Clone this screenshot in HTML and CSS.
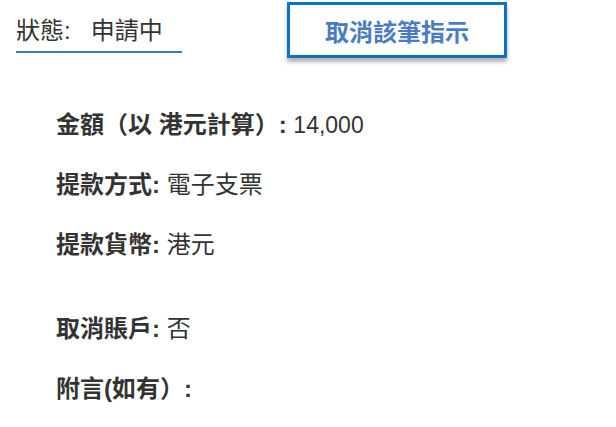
FILE: index.html
```html
<!DOCTYPE html>
<html lang="zh-Hant">
<head>
<meta charset="utf-8">
<link rel="stylesheet" href="styles.css">
</head>
<body>
<div class="page">
  <div class="header">
    <div class="status"><span class="status-label">狀態:</span><span class="status-value">申請中</span></div>
    <button class="cancel-btn">取消該筆指示</button>
  </div>
  <div class="details">
    <div class="row"><span class="label">金額（以 港元計算）:</span> <span class="value num">14,000</span></div>
    <div class="row"><span class="label">提款方式:</span> <span class="value">電子支票</span></div>
    <div class="row"><span class="label">提款貨幣:</span> <span class="value">港元</span></div>
    <div class="row row-spaced"><span class="label">取消賬戶:</span> <span class="value">否</span></div>
    <div class="row"><span class="label">附言(如有）:</span></div>
  </div>
</div>
</body>
</html>
```
FILE: styles.css
```css
html, body {
  margin: 0;
  padding: 0;
  background: #ffffff;
}
body {
  font-family: "Liberation Sans", "Noto Sans CJK TC", sans-serif;
  color: #333333;
}
.page {
  width: 616px;
  height: 427px;
  overflow: hidden;
}
.header {
  display: flex;
  align-items: flex-start;
  padding: 2px 0 0 16px;
}
.status {
  width: 166px;
  margin-top: 14px;
  height: 30px;
  line-height: 30px;
  padding-bottom: 5px;
  border-bottom: 2px solid #3f78b8;
  font-size: 24px;
  color: #333;
  white-space: nowrap;
}
.status-label {
  margin-right: 20px;
}
.cancel-btn {
  margin-left: 105px;
  width: 220px;
  height: 56px;
  border: 3px solid #0b72c4;
  background: #ffffff;
  color: #4a7dbf;
  font-family: "Liberation Sans", "Noto Sans CJK TC", sans-serif;
  font-size: 24px;
  font-weight: 700;
  box-shadow: 0 4px 4px rgba(0, 0, 0, 0.3);
  padding: 0;
}
.details {
  display: flex;
  flex-direction: column;
  gap: 30px;
  padding: 52px 0 0 56px;
}
.row {
  font-size: 24px;
  line-height: 30px;
  height: 30px;
  white-space: nowrap;
}
.row-spaced {
  margin-top: 24px;
}
.label {
  font-weight: 700;
}
.value {
  font-weight: 400;
}
.num {
  font-size: 23px;
}
```
